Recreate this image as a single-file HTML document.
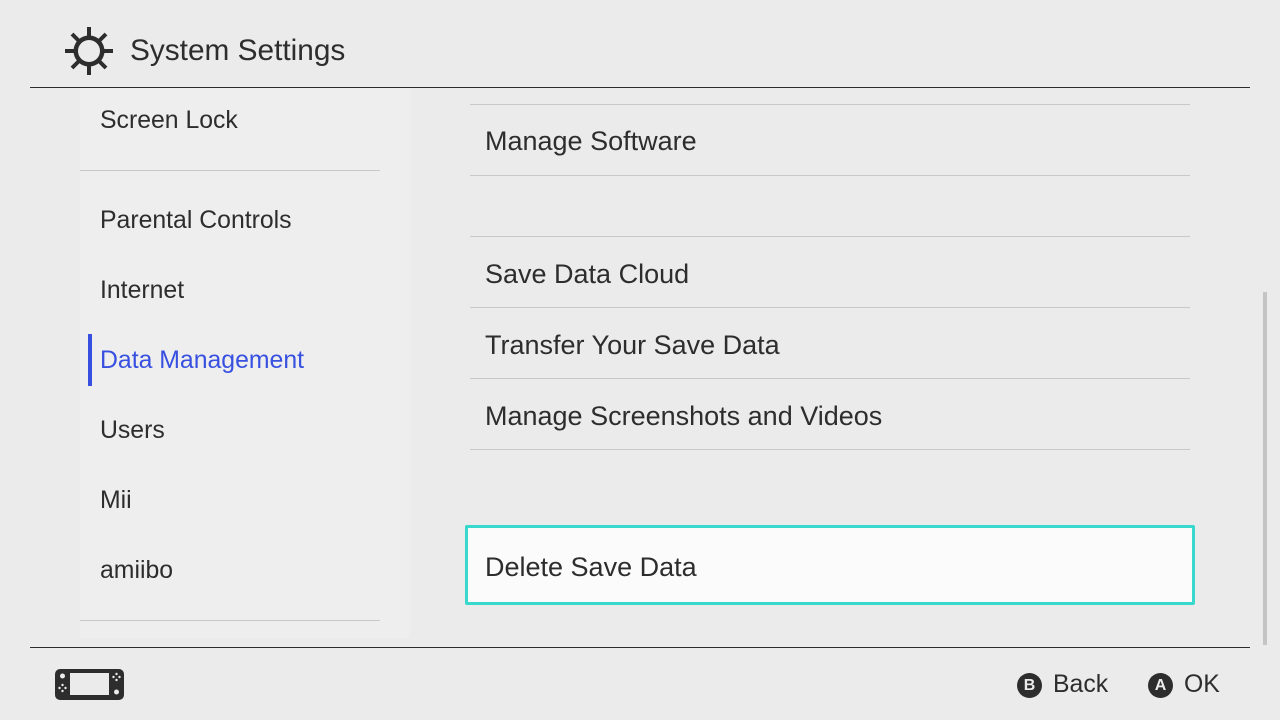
<!DOCTYPE html>
<html><head><meta charset="utf-8"><style>
body{margin:0;width:1280px;height:720px;background:#ebebeb;font-family:"Liberation Sans","DejaVu Sans",sans-serif;color:#2d2d2d;position:relative;overflow:hidden}
.a{position:absolute}
.t{font-size:24.8px;white-space:nowrap}
.r{font-size:27px}
.hl{position:absolute;height:1px;background:#c8c8c8}
</style></head><body>
<svg class="a" style="left:64px;top:26px" width="50" height="50" viewBox="0 0 50 50">
<g stroke="#2d2d2d" stroke-width="4">
<line x1="25" y1="1" x2="25" y2="49"/><line x1="1" y1="25" x2="49" y2="25"/>
<line x1="8" y1="8" x2="42" y2="42"/><line x1="42" y1="8" x2="8" y2="42"/>
</g>
<circle cx="25" cy="25" r="15.5" fill="#2d2d2d"/><circle cx="25" cy="25" r="11" fill="#ebebeb"/>
</svg>
<div class="a" style="left:130px;top:34px;font-size:29.8px;white-space:nowrap">System Settings</div>
<div class="a" style="left:30px;top:87px;width:1220px;height:1px;background:#2d2d2d"></div>
<div class="a" style="left:80px;top:88px;width:330px;height:550px;background:#eeeeee"></div>
<div class="a t" style="left:100px;top:107px">Screen Lock</div>
<div class="hl" style="left:80px;top:170px;width:300px"></div>
<div class="a t" style="left:100px;top:207px">Parental Controls</div>
<div class="a t" style="left:100px;top:277px">Internet</div>
<div class="a" style="left:88px;top:334px;width:4px;height:52px;background:#3750e0"></div>
<div class="a t" style="left:100px;top:347px;color:#3750e0">Data Management</div>
<div class="a t" style="left:100px;top:417px">Users</div>
<div class="a t" style="left:100px;top:487px">Mii</div>
<div class="a t" style="left:100px;top:557px">amiibo</div>
<div class="hl" style="left:80px;top:620px;width:300px"></div>

<div class="hl" style="left:470px;top:104px;width:720px"></div>
<div class="a t r" style="left:485px;top:126px">Manage Software</div>
<div class="hl" style="left:470px;top:175px;width:720px"></div>
<div class="hl" style="left:470px;top:236px;width:720px"></div>
<div class="a t r" style="left:485px;top:259px">Save Data Cloud</div>
<div class="hl" style="left:470px;top:307px;width:720px"></div>
<div class="a t r" style="left:485px;top:330px">Transfer Your Save Data</div>
<div class="hl" style="left:470px;top:378px;width:720px"></div>
<div class="a t r" style="left:485px;top:401px">Manage Screenshots and Videos</div>
<div class="hl" style="left:470px;top:449px;width:720px"></div>
<div class="a" style="left:465px;top:525px;width:724px;height:74px;border:3px solid #39d8cc;background:#fbfbfb;border-radius:2px"></div>
<div class="a t r" style="left:485px;top:552px">Delete Save Data</div>
<div class="a" style="left:1263px;top:292px;width:4px;height:353px;background:#c4c4c4"></div>

<div class="a" style="left:30px;top:647px;width:1220px;height:1px;background:#2d2d2d"></div>
<svg class="a" style="left:55px;top:669px" width="69" height="31" viewBox="0 0 69 31">
<rect x="0" y="0" width="69" height="31" rx="5" fill="#2d2d2d"/>
<rect x="15" y="4" width="39" height="22" fill="#ebebeb"/>
<circle cx="7.5" cy="7" r="2.5" fill="#ebebeb"/>
<circle cx="61.5" cy="23" r="2.5" fill="#ebebeb"/>
<g fill="#ebebeb"><circle cx="7.5" cy="16" r="1.2"/><circle cx="7.5" cy="22" r="1.2"/><circle cx="4.5" cy="19" r="1.2"/><circle cx="10.5" cy="19" r="1.2"/>
<circle cx="61.5" cy="5" r="1.2"/><circle cx="61.5" cy="11" r="1.2"/><circle cx="58.5" cy="8" r="1.2"/><circle cx="64.5" cy="8" r="1.2"/></g>
</svg>
<div class="a" style="left:1017px;top:673px;width:25px;height:25px;border-radius:50%;background:#2d2d2d;color:#ebebeb;font-size:16px;font-weight:bold;text-align:center;line-height:25px">B</div>
<div class="a t" style="left:1053px;top:671px">Back</div>
<div class="a" style="left:1148px;top:673px;width:25px;height:25px;border-radius:50%;background:#2d2d2d;color:#ebebeb;font-size:16px;font-weight:bold;text-align:center;line-height:25px">A</div>
<div class="a t" style="left:1184px;top:671px">OK</div>
</body></html>
